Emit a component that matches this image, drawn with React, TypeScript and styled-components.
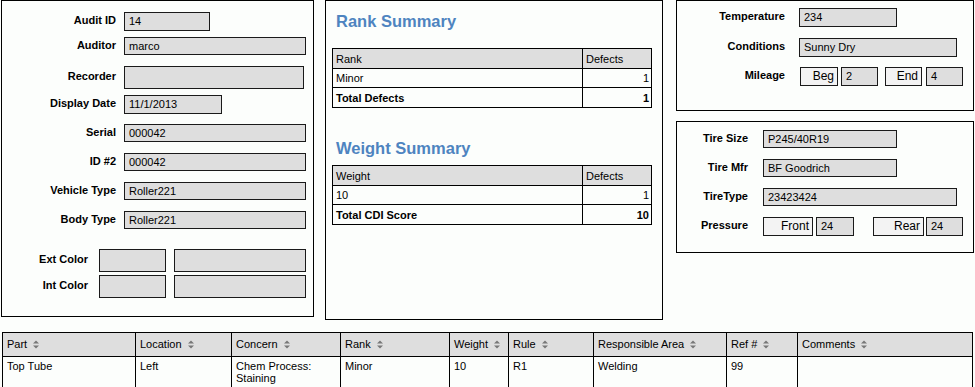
import React from "react";
import styled, { createGlobalStyle } from "styled-components";

const GlobalStyle = createGlobalStyle`
  body {
    margin: 0;
    background: #fcfefc;
    font-family: "Liberation Sans", Arial, sans-serif;
    color: #000;
  }
`;

const Page = styled.div`
  width: 975px;
  height: 387px;
  overflow: hidden;
`;

const TopArea = styled.div`
  display: flex;
  align-items: flex-start;
  padding-left: 1px;
  height: 320px;
`;

const Panel = styled.div<{ $w: number; $h: number; $pt?: number }>`
  box-sizing: border-box;
  width: ${(p) => p.$w}px;
  height: ${(p) => p.$h}px;
  padding-top: ${(p) => p.$pt ?? 0}px;
  border: 1px solid #000;
  background: #fcfefc;
`;

const MiddlePanel = styled(Panel)`
  margin-left: 11px;
  padding-left: 9px;
`;

const RightCol = styled.div`
  display: flex;
  flex-direction: column;
  gap: 10px;
  margin-left: 13px;
`;

const Row = styled.div<{ $mt: number }>`
  display: flex;
  align-items: center;
  margin-top: ${(p) => p.$mt}px;
`;

const Label = styled.div<{ $w: number; $gap: number }>`
  width: ${(p) => p.$w}px;
  margin-right: ${(p) => p.$gap}px;
  text-align: right;
  font-size: 11px;
  font-weight: bold;
  flex-shrink: 0;
  margin-top: -3px;
`;

const Field = styled.div<{ $w: number; $h?: number; $ml?: number }>`
  box-sizing: border-box;
  width: ${(p) => p.$w}px;
  height: ${(p) => p.$h ?? 19}px;
  margin-left: ${(p) => p.$ml ?? 0}px;
  border: 1px solid #1a1a1a;
  background: #dedede;
  font-size: 11px;
  line-height: ${(p) => (p.$h ?? 19) - 2}px;
  padding-left: 4px;
  white-space: nowrap;
  flex-shrink: 0;
`;

const Tag = styled.div<{ $w: number; $ml?: number }>`
  box-sizing: border-box;
  width: ${(p) => p.$w}px;
  height: 19px;
  margin-left: ${(p) => p.$ml ?? 0}px;
  border: 1px solid #1a1a1a;
  background: #f3f3f3;
  font-size: 12px;
  line-height: 17px;
  text-align: right;
  padding-right: 3px;
  flex-shrink: 0;
`;

const Heading = styled.h2<{ $mt: number }>`
  margin: ${(p) => p.$mt}px 0 0 1px;
  font-family: "Liberation Sans", Arial, sans-serif;
  font-size: 16.5px;
  line-height: 20px;
  font-weight: bold;
  color: #4e84c0;
`;

const SummaryTable = styled.table<{ $mt: number }>`
  margin: ${(p) => p.$mt}px 0 0 -3px;
  width: 320px;
  border-collapse: collapse;
  font-size: 11px;
  th,
  td {
    border: 1px solid #000;
    height: 18px;
    padding: 0 3px;
    text-align: left;
    font-weight: normal;
  }
  th {
    background: #dedede;
    height: 19px;
  }
  td.num {
    text-align: right;
    padding-right: 2px;
  }
  tr.total td {
    font-weight: bold;
    height: 19px;
  }
`;

const DefectTable = styled.table`
  margin: 12px 0 0 2px;
  width: 970px;
  border-collapse: collapse;
  table-layout: fixed;
  font-size: 11px;
  th,
  td {
    border: 1px solid #000;
    text-align: left;
    font-weight: normal;
    padding: 0 4px;
  }
  th {
    background: #dedede;
    height: 23px;
  }
  td {
    height: 27px;
    vertical-align: top;
    padding-top: 3px;
    line-height: 12px;
  }
`;

const SortWrap = styled.span`
  display: inline-block;
  margin-left: 6px;
  vertical-align: -1px;
`;

const SortIcon = () => (
  <SortWrap>
    <svg width="6" height="9" viewBox="0 0 6 9">
      <path d="M0 3.5 L3 0.5 L6 3.5 Z" fill="#777" />
      <path d="M0 5.5 L3 8.5 L6 5.5 Z" fill="#777" />
    </svg>
  </SortWrap>
);

const leftFields = [
  { label: "Audit ID", value: "14", w: 86, h: 19, mt: 0 },
  { label: "Auditor", value: "marco", w: 182, h: 18, mt: 6 },
  { label: "Recorder", value: "", w: 180, h: 23, mt: 11 },
  { label: "Display Date", value: "11/1/2013", w: 98, h: 19, mt: 6 },
  { label: "Serial", value: "000042", w: 182, h: 18, mt: 10 },
  { label: "ID #2", value: "000042", w: 182, h: 18, mt: 11 },
  { label: "Vehicle Type", value: "Roller221", w: 182, h: 18, mt: 11 },
  { label: "Body Type", value: "Roller221", w: 182, h: 18, mt: 11 },
];

const columns = [
  { name: "Part", w: 133 },
  { name: "Location", w: 96 },
  { name: "Concern", w: 109 },
  { name: "Rank", w: 109 },
  { name: "Weight", w: 59 },
  { name: "Rule", w: 85 },
  { name: "Responsible Area", w: 133 },
  { name: "Ref #", w: 71 },
  { name: "Comments", w: 175 },
];

const App = () => {
  return (
    <Page>
      <GlobalStyle />
      <TopArea>
        <Panel $w={313} $h={317} $pt={11}>
          {leftFields.map((f) => (
            <Row key={f.label} $mt={f.mt}>
              <Label $w={114} $gap={8}>{f.label}</Label>
              <Field $w={f.w} $h={f.h}>{f.value}</Field>
            </Row>
          ))}
          <Row $mt={20}>
            <Label $w={86} $gap={11}>Ext Color</Label>
            <Field $w={67} $h={23} />
            <Field $w={132} $h={23} $ml={8} />
          </Row>
          <Row $mt={3}>
            <Label $w={86} $gap={11}>Int Color</Label>
            <Field $w={67} $h={23} />
            <Field $w={132} $h={23} $ml={8} />
          </Row>
        </Panel>

        <MiddlePanel $w={338} $h={320} $pt={10}>
          <Heading $mt={0}>Rank Summary</Heading>
          <SummaryTable $mt={17}>
            <thead>
              <tr>
                <th>Rank</th>
                <th style={{ width: 62 }}>Defects</th>
              </tr>
            </thead>
            <tbody>
              <tr>
                <td>Minor</td>
                <td className="num">1</td>
              </tr>
              <tr className="total">
                <td>Total Defects</td>
                <td className="num">1</td>
              </tr>
            </tbody>
          </SummaryTable>
          <Heading $mt={30}>Weight Summary</Heading>
          <SummaryTable $mt={7}>
            <thead>
              <tr>
                <th>Weight</th>
                <th style={{ width: 62 }}>Defects</th>
              </tr>
            </thead>
            <tbody>
              <tr>
                <td>10</td>
                <td className="num">1</td>
              </tr>
              <tr className="total">
                <td>Total CDI Score</td>
                <td className="num">10</td>
              </tr>
            </tbody>
          </SummaryTable>
        </MiddlePanel>

        <RightCol>
          <Panel $w={298} $h={111} $pt={7}>
            <Row $mt={0}>
              <Label $w={108} $gap={14}>Temperature</Label>
              <Field $w={98}>234</Field>
            </Row>
            <Row $mt={11}>
              <Label $w={108} $gap={14}>Conditions</Label>
              <Field $w={158}>Sunny Dry</Field>
            </Row>
            <Row $mt={10}>
              <Label $w={108} $gap={14}>Mileage</Label>
              <Tag $w={38} $ml={1}>Beg</Tag>
              <Field $w={37} $ml={3}>2</Field>
              <Tag $w={37} $ml={7}>End</Tag>
              <Field $w={37} $ml={4}>4</Field>
            </Row>
          </Panel>
          <Panel $w={298} $h={132} $pt={8}>
            <Row $mt={0}>
              <Label $w={71} $gap={15}>Tire Size</Label>
              <Field $w={134} $h={18}>P245/40R19</Field>
            </Row>
            <Row $mt={11}>
              <Label $w={71} $gap={15}>Tire Mfr</Label>
              <Field $w={134} $h={18}>BF Goodrich</Field>
            </Row>
            <Row $mt={11}>
              <Label $w={71} $gap={15}>TireType</Label>
              <Field $w={194} $h={18}>23423424</Field>
            </Row>
            <Row $mt={11}>
              <Label $w={71} $gap={15}>Pressure</Label>
              <Tag $w={50}>Front</Tag>
              <Field $w={38} $ml={3}>24</Field>
              <Tag $w={51} $ml={19}>Rear</Tag>
              <Field $w={37} $ml={2}>24</Field>
            </Row>
          </Panel>
        </RightCol>
      </TopArea>

      <DefectTable>
        <colgroup>
          {columns.map((c) => (
            <col key={c.name} style={{ width: c.w }} />
          ))}
        </colgroup>
        <thead>
          <tr>
            {columns.map((c) => (
              <th key={c.name}>
                {c.name}
                <SortIcon />
              </th>
            ))}
          </tr>
        </thead>
        <tbody>
          <tr>
            <td>Top Tube</td>
            <td>Left</td>
            <td>
              Chem Process:
              <br />
              Staining
            </td>
            <td>Minor</td>
            <td>10</td>
            <td>R1</td>
            <td>Welding</td>
            <td>99</td>
            <td></td>
          </tr>
        </tbody>
      </DefectTable>
    </Page>
  );
};

export default App;
